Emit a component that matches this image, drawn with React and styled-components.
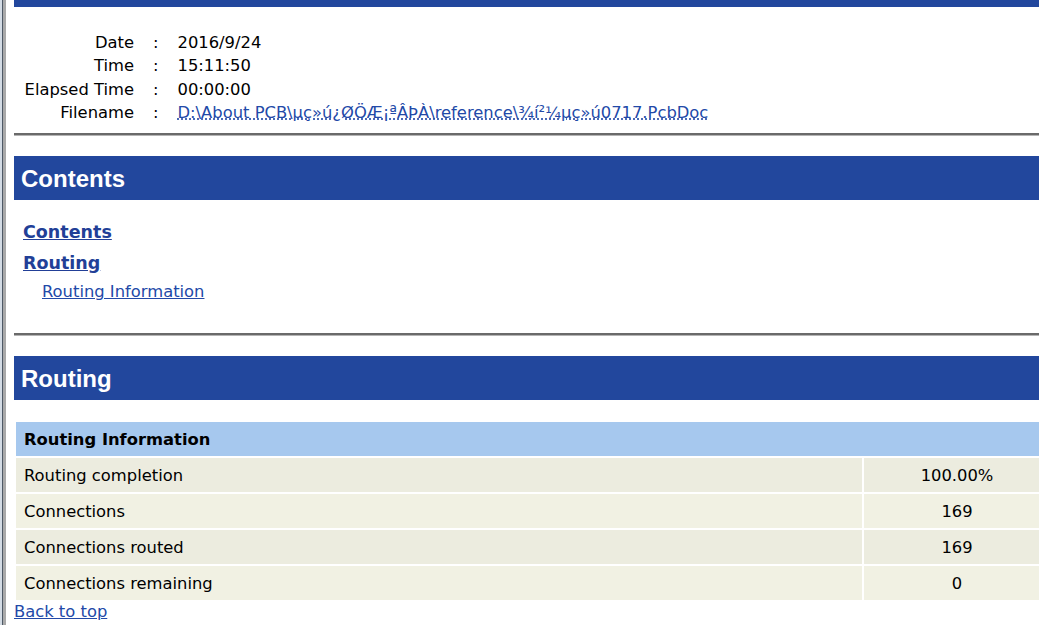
import styled, { createGlobalStyle } from "styled-components";

const GlobalStyle = createGlobalStyle`
  html, body {
    margin: 0;
    padding: 0;
    overflow: hidden;
    background: #fff;
  }
  body {
    font-family: "DejaVu Sans", Verdana, sans-serif;
    font-size: 16.35px;
    color: #000;
  }
`;

const Window = styled.div`
  display: flex;
  min-height: 100vh;
`;

const Frame = styled.div`
  flex: 0 0 6px;
  background: linear-gradient(
    to right,
    #d3dbe4 0,
    #d3dbe4 2px,
    #4e5966 2px,
    #4e5966 3px,
    #a9a9a9 3px,
    #a9a9a9 6px
  );
`;

const Page = styled.div`
  flex: 0 0 1038px;
  padding-left: 8px;
`;

const TopBar = styled.div`
  height: 7px;
  background: #22479d;
`;

const Info = styled.div`
  display: grid;
  grid-template-columns: 110px max-content max-content;
  column-gap: 18px;
  padding: 24px 0 9px 10px;
  line-height: 23.3px;
`;

const Label = styled.div`
  text-align: right;
`;

const Colon = styled.div`
  padding: 0 1px;
`;

const Link = styled.a`
  color: #2249a8;
  text-decoration: underline;
  text-decoration-style: ${(p) => (p.$dotted ? "dotted" : "solid")};
  cursor: pointer;
`;

const Rule = styled.div`
  border-top: 2px solid #6a6a6a;
  border-bottom: 1px solid #b4b4b4;
`;

const SectionHead = styled.h2`
  margin: 20px 0 0;
  height: 44px;
  padding-left: 7px;
  background: #22479d;
  color: #fff;
  font-family: "Liberation Sans", Arial, sans-serif;
  font-weight: bold;
  font-size: 24px;
  line-height: 45px;
`;

const Toc = styled.div`
  display: flex;
  flex-direction: column;
  align-items: flex-start;
  padding: 17px 0 28px 9px;
`;

const TocMain = styled(Link)`
  font-weight: bold;
  font-size: 17.5px;
  line-height: 31px;
  color: #223f97;
`;

const TocSub = styled(Link)`
  margin-left: 19px;
  line-height: 26px;
`;

const Table = styled.table`
  margin-top: 20px;
  width: 100%;
  border-spacing: 2px;
  border-collapse: separate;
`;

const HeadCell = styled.th`
  background: #a6c8ee;
  height: 34px;
  padding: 0 8px;
  text-align: left;
  font-weight: bold;
`;

const Cell = styled.td`
  height: 34px;
  padding: 0 8px;
  background: ${(p) => (p.$odd ? "#ececdf" : "#f1f1e3")};
  text-align: ${(p) => (p.$value ? "center" : "left")};
  width: ${(p) => (p.$value ? "170px" : "auto")};
`;

const Back = styled(Link)`
  display: inline-block;
  line-height: 20px;
`;

const info = [
  ["Date", "2016/9/24"],
  ["Time", "15:11:50"],
  ["Elapsed Time", "00:00:00"],
];

const rows = [
  ["Routing completion", "100.00%"],
  ["Connections", "169"],
  ["Connections routed", "169"],
  ["Connections remaining", "0"],
];

export default function App() {
  return (
    <>
      <GlobalStyle />
      <Window>
        <Frame />
        <Page>
          <TopBar />
          <Info>
            {info.map(([k, v]) => (
              <>
                <Label key={k}>{k}</Label>
                <Colon>:</Colon>
                <div>{v}</div>
              </>
            ))}
            <Label>Filename</Label>
            <Colon>:</Colon>
            <div>
              <Link $dotted>
                D:\About PCB\µç»ú¿ØÖÆ¡ªÂÞÀ\reference\¾í²¼µç»ú0717.PcbDoc
              </Link>
            </div>
          </Info>
          <Rule />
          <SectionHead>Contents</SectionHead>
          <Toc>
            <TocMain>Contents</TocMain>
            <TocMain>Routing</TocMain>
            <TocSub>Routing Information</TocSub>
          </Toc>
          <Rule />
          <SectionHead>Routing</SectionHead>
          <Table>
            <thead>
              <tr>
                <HeadCell colSpan={2}>Routing Information</HeadCell>
              </tr>
            </thead>
            <tbody>
              {rows.map(([k, v], i) => (
                <tr key={k}>
                  <Cell $odd={i % 2 === 0}>{k}</Cell>
                  <Cell $odd={i % 2 === 0} $value>
                    {v}
                  </Cell>
                </tr>
              ))}
            </tbody>
          </Table>
          <Back>Back to top</Back>
        </Page>
      </Window>
    </>
  );
}
